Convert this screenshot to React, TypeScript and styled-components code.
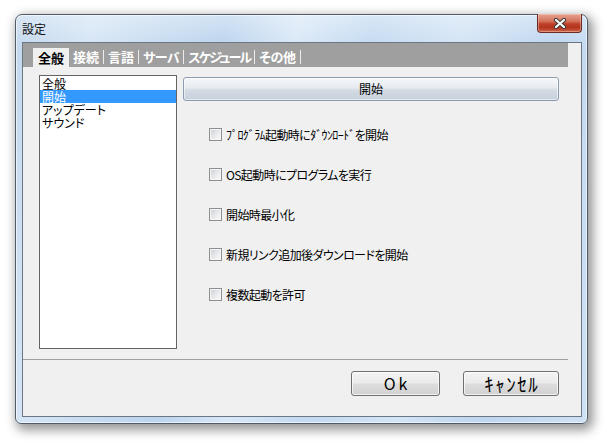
import React from "react";
import styled, { createGlobalStyle } from "styled-components";

const Global = createGlobalStyle`
  html, body { margin: 0; padding: 0; background: #ffffff; }
  body {
    width: 607px; height: 443px; overflow: hidden;
    font-family: "Noto Sans CJK JP", "Noto Sans", sans-serif;
  }
`;

const Stage = styled.div`
  width: 607px;
  height: 443px;
  box-sizing: border-box;
  padding: 14px 0 0 15px;
  background: #ffffff;
`;

const Window = styled.div`
  width: 573px;
  height: 410px;
  box-sizing: border-box;
  display: flex;
  flex-direction: column;
  padding: 0 5px 6px 6px;
  border: 1px solid #4f5b68;
  border-radius: 7px 7px 6px 6px;
  background:
    linear-gradient(180deg, rgba(255,255,255,0.35) 0px, rgba(255,255,255,0) 30px),
    linear-gradient(100deg, #c3d8ee 0%, #d5e5f5 12%, #c6dbf0 24%, #bcd4ee 33%, #d9e8f7 44%, #c4daf1 56%, #d3e4f5 70%, #bfd6ef 84%, #cfe1f4 100%);
  box-shadow:
    inset 0 0 0 1px rgba(255,255,255,0.6),
    3px 4px 11px 2px rgba(0,0,0,0.42);
`;

const TitleBar = styled.div`
  height: 27px;
  display: flex;
  align-items: flex-start;
  justify-content: space-between;
`;

const TitleText = styled.div`
  font-size: 12px;
  line-height: 27px;
  color: #111;
`;

const CloseButton = styled.div`
  width: 45px;
  height: 19px;
  margin-top: -1px;
  box-sizing: border-box;
  display: flex;
  align-items: center;
  justify-content: center;
  border: 1px solid #6b2b22;
  border-top: none;
  border-radius: 0 0 4px 4px;
  background: linear-gradient(180deg, #e6a391 0%, #d3735d 40%, #bf4029 55%, #b3351d 75%, #cf6446 100%);
  box-shadow: inset 0 0 0 1px rgba(255,220,210,0.4);
`;

const Client = styled.div`
  flex: 1;
  display: flex;
  flex-direction: column;
  border: 1px solid #6b7785;
  background: #f0f0f0;
`;

const TabBar = styled.div`
  height: 24px;
  margin-right: 13px;
  padding-left: 10px;
  display: flex;
  align-items: flex-end;
  background: #9f9f9f;
`;

const Tab = styled.div<{ $active?: boolean; $tight?: number }>`
  font-size: 13px;
  font-weight: bold;
  font-feature-settings: "palt";
  letter-spacing: ${(p) => -(p.$tight ?? 0)}px;
  white-space: nowrap;
  ${(p) =>
    p.$active
      ? `
    height: 19px;
    line-height: 19px;
    padding: 0 5px;
    background: #f0f0f0;
    color: #000;
  `
      : `
    height: 14px;
    line-height: 14px;
    margin-bottom: 3px;
    padding: 0 4px 0 4px;
    color: #ffffff;
    border-right: 1px solid #ececec;
  `}
`;

const Content = styled.div`
  height: 292px;
  box-sizing: border-box;
  display: flex;
  gap: 6px;
  padding: 8px 22px 0 16px;
`;

const ListBox = styled.div`
  width: 138px;
  height: 274px;
  box-sizing: border-box;
  border: 1px solid #646464;
  background: #ffffff;
  padding-top: 1px;
`;

const ListItem = styled.div<{ $selected?: boolean }>`
  height: 13px;
  line-height: 13px;
  font-size: 12px;
  padding-left: 2px;
  white-space: nowrap;
  font-feature-settings: "palt";
  color: ${(p) => (p.$selected ? "#ffffff" : "#000000")};
  background: ${(p) => (p.$selected ? "#3399ff" : "transparent")};
`;

const RightColumn = styled.div`
  flex: 1;
  display: flex;
  flex-direction: column;
  padding-top: 2px;
`;

const HeaderButton = styled.div`
  height: 24px;
  box-sizing: border-box;
  border: 1px solid #8d9db0;
  border-radius: 3px;
  background: linear-gradient(180deg, #f6f8fa 0%, #e6eaf0 45%, #d3dbe4 55%, #c6d0dc 100%);
  box-shadow: inset 0 0 0 1px rgba(255,255,255,0.55);
  font-size: 12px;
  line-height: 22px;
  text-align: center;
  color: #000;
`;

const Options = styled.div`
  display: flex;
  flex-direction: column;
  gap: 27px;
  margin-top: 27px;
  padding-left: 26px;
`;

const OptionRow = styled.label`
  height: 13px;
  display: flex;
  align-items: center;
  gap: 4px;
  font-size: 12px;
  line-height: 13px;
  letter-spacing: -0.6px;
  color: #000;
  white-space: nowrap;
  font-feature-settings: "palt";
`;

const CheckBox = styled.span`
  width: 13px;
  height: 13px;
  flex: none;
  box-sizing: border-box;
  border: 1px solid #8e8f8f;
  background: linear-gradient(135deg, #cdd0d6 0%, #e6e8eb 50%, #fbfbfb 100%);
  box-shadow: inset 0 0 0 1px #f4f4f4;
`;

const Divider = styled.div`
  height: 1px;
  margin-right: 13px;
  background: #a0a0a0;
`;

const Footer = styled.div`
  flex: 1;
  display: flex;
  justify-content: flex-end;
  align-items: flex-start;
  gap: 23px;
  padding: 11px 22px 0 0;
`;

const DialogButton = styled.div<{ $width: number; $size: number; $spacing: number }>`
  width: ${(p) => p.$width}px;
  height: 25px;
  box-sizing: border-box;
  border: 1px solid #707070;
  border-radius: 3px;
  background: linear-gradient(180deg, #f3f3f3 0%, #ebebeb 48%, #dddddd 52%, #d2d2d2 100%);
  box-shadow: inset 0 0 0 1px rgba(255,255,255,0.7);
  font-size: ${(p) => p.$size}px;
  line-height: 23px;
  letter-spacing: ${(p) => p.$spacing}px;
  padding-left: ${(p) => p.$spacing}px;
  text-align: center;
  color: #000;
  white-space: nowrap;
`;

const CloseIcon = () => (
  <svg width="14" height="11" viewBox="0 0 14 11">
    <path d="M3 2 L11 9 M11 2 L3 9" stroke="#3a3a3a" strokeWidth="4.2" strokeLinecap="round" />
    <path d="M3 2 L11 9 M11 2 L3 9" stroke="#ffffff" strokeWidth="2.2" strokeLinecap="round" />
  </svg>
);

const tabs: { label: string; tight?: number }[] = [
  { label: "全般" },
  { label: "接続" },
  { label: "言語" },
  { label: "サーバ", tight: 0.5 },
  { label: "スケジュール", tight: 1.8 },
  { label: "その他", tight: 0.3 },
];
const listItems = ["全般", "開始", "アップデート", "サウンド"];
const options = [
  "ﾌﾟﾛｸﾞﾗﾑ起動時にﾀﾞｳﾝﾛｰﾄﾞを開始",
  "OS起動時にプログラムを実行",
  "開始時最小化",
  "新規リンク追加後ダウンロードを開始",
  "複数起動を許可",
];

export default function App() {
  return (
    <>
      <Global />
      <Stage>
        <Window>
          <TitleBar>
            <TitleText>設定</TitleText>
            <CloseButton>
              <CloseIcon />
            </CloseButton>
          </TitleBar>
          <Client>
            <TabBar>
              {tabs.map((t, i) => (
                <Tab key={t.label} $active={i === 0} $tight={t.tight}>
                  {t.label}
                </Tab>
              ))}
            </TabBar>
            <Content>
              <ListBox>
                {listItems.map((item, i) => (
                  <ListItem key={item} $selected={i === 1}>
                    {item}
                  </ListItem>
                ))}
              </ListBox>
              <RightColumn>
                <HeaderButton>開始</HeaderButton>
                <Options>
                  {options.map((o) => (
                    <OptionRow key={o}>
                      <CheckBox />
                      {o}
                    </OptionRow>
                  ))}
                </Options>
              </RightColumn>
            </Content>
            <Divider />
            <Footer>
              <DialogButton $width={89} $size={16} $spacing={3}>Ok</DialogButton>
              <DialogButton $width={96} $size={19} $spacing={1.5}>ｷｬﾝｾﾙ</DialogButton>
            </Footer>
          </Client>
        </Window>
      </Stage>
    </>
  );
}
